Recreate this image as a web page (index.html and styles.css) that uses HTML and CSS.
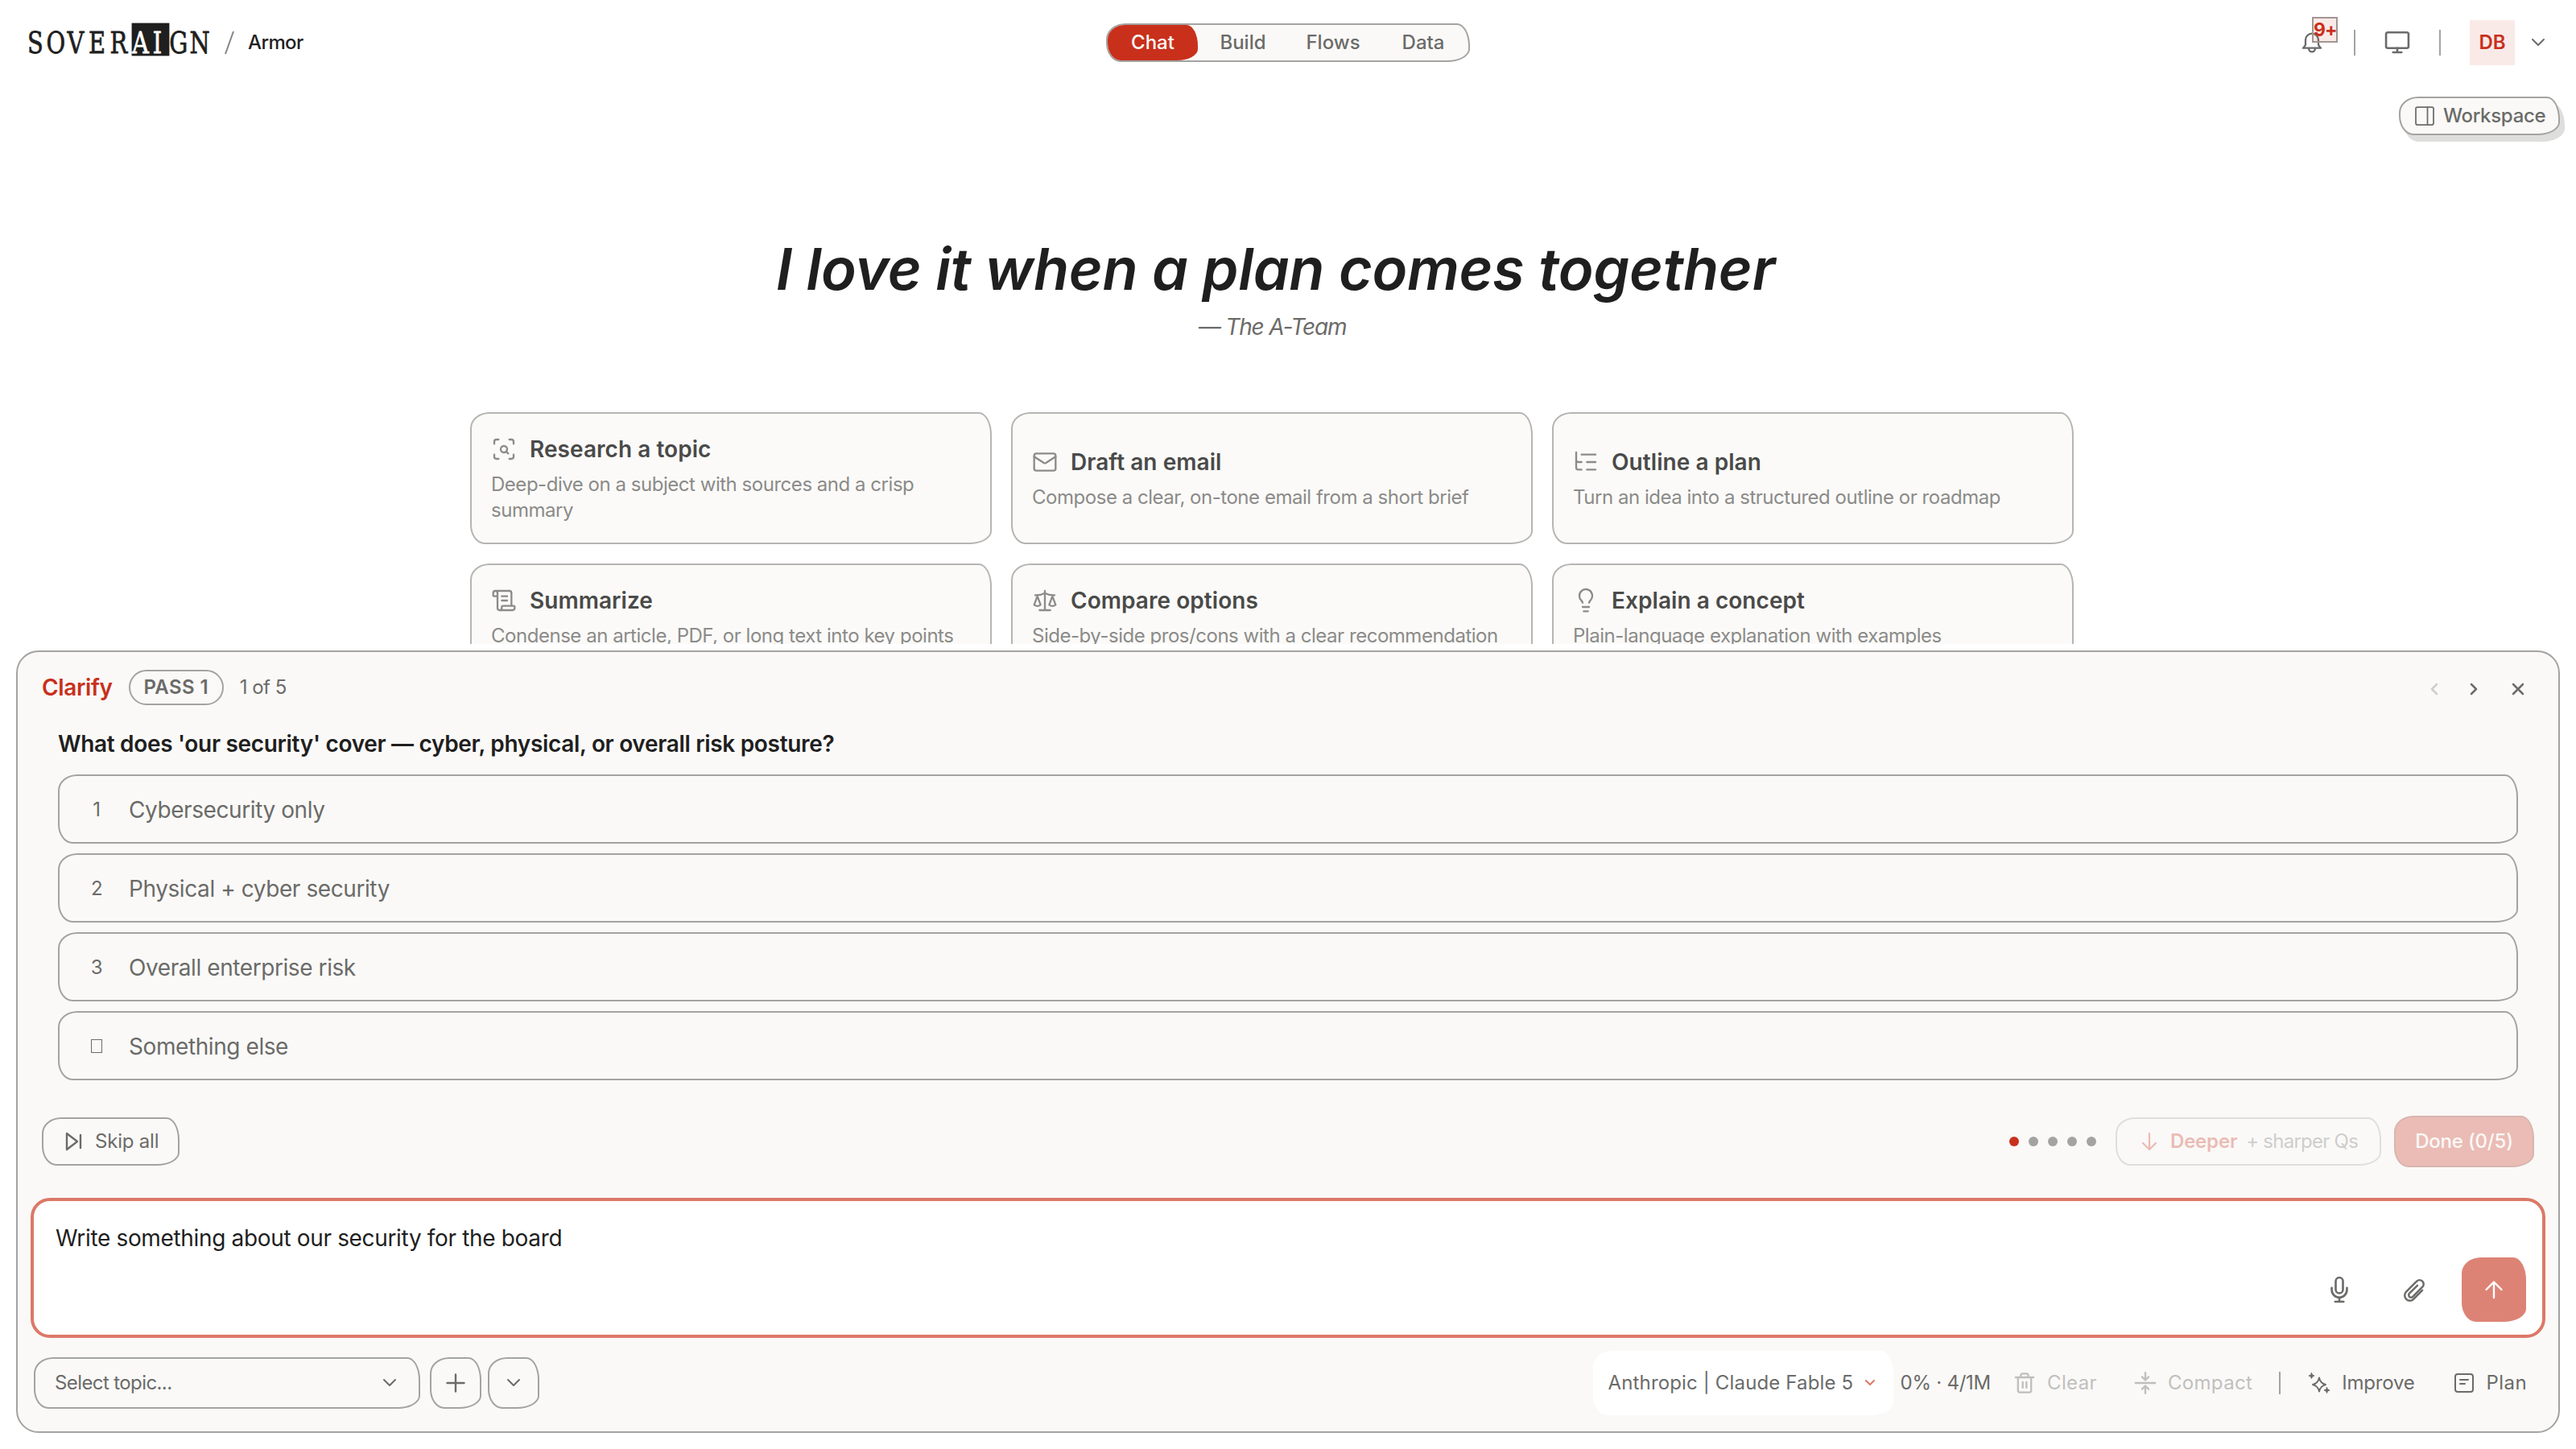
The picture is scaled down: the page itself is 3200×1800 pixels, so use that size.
FILE: index.html
```html
<!DOCTYPE html>
<html lang="en">
<head>
    <meta charset="UTF-8">
    <meta name="viewport" content="width=device-width, initial-scale=1.0">
    <title>Soveraign - Armor</title>
    <link rel="stylesheet" href="styles.css">
</head>
<body>
    <header class="topbar">
        <div class="brand">
            <svg class="logo" width="230" height="44" viewBox="0 0 230 44">
                <rect x="130" y="2" width="46" height="40" fill="#1f1f1f"/>
                <g transform="scale(.76 1)">
                    <text y="39" x="0 31 65 100 135">SOVER</text>
                    <text y="39" x="171 205" class="logo-ai">AI</text>
                    <text y="39" x="232 265">GN</text>
                </g>
            </svg>
            <svg class="slash" width="12" height="30" viewBox="0 0 12 30"><path d="M1 29L11 1"/></svg>
            <span class="org">Armor</span>
        </div>
        <nav class="tabs">
            <a class="tab active">Chat</a>
            <a class="tab">Build</a>
            <a class="tab">Flows</a>
            <a class="tab">Data</a>
        </nav>
        <div class="account">
            <div class="bell">
                <svg class="icon" width="32" height="32" viewBox="0 0 24 24"><path d="M6 9.5a6 6 0 0 1 12 0v4.200c0 1.200 1.300 2 2.300 3.300H3.700c1-1.300 2.300-2.100 2.300-3.300zM9 17.500a3 3 0 0 0 6 0"/></svg>
                <span class="badge">9+</span>
            </div>
            <i class="divider"></i>
            <svg class="icon monitor" width="36" height="36" viewBox="0 0 24 24"><rect x="2.700" y="3.500" width="18.600" height="13" rx="1.500"/><path d="M12 16.500v3.500M8.500 20h7"/></svg>
            <i class="divider"></i>
            <span class="avatar">DB</span>
            <svg class="icon" width="18" height="12" viewBox="0 0 18 12"><path class="thin" d="M2 2l7 7 7-7"/></svg>
        </div>
    </header>

    <main class="hero">
        <button class="workspace box">
            <svg class="icon" width="24" height="24" viewBox="0 0 24 24"><rect x="1" y="1" width="22" height="22" rx="2"/><path d="M15.500 1v22"/></svg>
            <span>Workspace</span>
        </button>
        <div class="intro">
            <h1>I love it when a plan comes together</h1>
            <p class="source">— The A-Team</p>
            <div class="cards">
                <div class="card box">
                    <h3><svg class="icon" width="32" height="32" viewBox="0 0 24 24"><path d="M3 7V5a2 2 0 0 1 2-2h2M17 3h2a2 2 0 0 1 2 2v2M21 17v2a2 2 0 0 1-2 2h-2M7 21H5a2 2 0 0 1-2-2v-2M16 16l-1.900-1.900"/><circle cx="12" cy="12" r="3"/></svg><span>Research a topic</span></h3>
                    <p>Deep-dive on a subject with sources and a crisp<br>summary</p>
                </div>
                <div class="card box">
                    <h3><svg class="icon" width="32" height="32" viewBox="0 0 24 24"><rect x="2" y="4" width="20" height="16" rx="2"/><path d="M22 7l-9 5.700a2 2 0 0 1-2 0L2 7"/></svg><span>Draft an email</span></h3>
                    <p>Compose a clear, on-tone email from a short brief</p>
                </div>
                <div class="card box">
                    <h3><svg class="icon" width="32" height="32" viewBox="0 0 24 24"><path d="M8 5h13M13 12h8M13 19h8M3 3v14a2 2 0 0 0 2 2h3M3 10a2 2 0 0 0 2 2h3"/></svg><span>Outline a plan</span></h3>
                    <p>Turn an idea into a structured outline or roadmap</p>
                </div>
                <div class="card box">
                    <h3><svg class="icon" width="32" height="32" viewBox="0 0 24 24"><path d="M15 12h-5M15 8h-5M19 17V5a2 2 0 0 0-2-2H4M8 21h12a2 2 0 0 0 2-2v-1a1 1 0 0 0-1-1H11a1 1 0 0 0-1 1v1a2 2 0 1 1-4 0V5a2 2 0 1 0-4 0v2a1 1 0 0 0 1 1h3"/></svg><span>Summarize</span></h3>
                    <p>Condense an article, PDF, or long text into key points</p>
                </div>
                <div class="card box">
                    <h3><svg class="icon" width="32" height="32" viewBox="0 0 24 24"><path d="M12 3v18M7 21h10M3 7h1a17 17 0 0 0 8-2 17 17 0 0 0 8 2h1M19 8l3 8a5 5 0 0 1-6 0zM5 8l3 8a5 5 0 0 1-6 0z"/></svg><span>Compare options</span></h3>
                    <p>Side-by-side pros/cons with a clear recommendation</p>
                </div>
                <div class="card box">
                    <h3><svg class="icon" width="32" height="32" viewBox="0 0 24 24"><path d="M15 14c.2-1 .7-1.700 1.500-2.500A6 6 0 1 0 6 8c0 1 .2 2.200 1.500 3.500.7.7 1.300 1.500 1.500 2.500M9 18h6M10 22h4"/></svg><span>Explain a concept</span></h3>
                    <p>Plain-language explanation with examples</p>
                </div>
            </div>
        </div>
    </main>

    <section class="panel">
        <div class="clarify-head">
            <span class="clarify">Clarify</span>
            <span class="pass">PASS 1</span>
            <span class="step">1 of 5</span>
            <div class="pager">
                <svg class="icon off" width="10" height="16" viewBox="0 0 10 16"><path d="M8 2L2 8l6 6"/></svg>
                <svg class="icon" width="10" height="16" viewBox="0 0 10 16"><path d="M2 2l6 6-6 6"/></svg>
                <svg class="icon close" width="16" height="16" viewBox="0 0 16 16"><path d="M2 2l12 12M14 2L2 14"/></svg>
            </div>
        </div>

        <div class="question">
            <h2>What does 'our security' cover — cyber, physical, or overall risk posture?</h2>
            <div class="option box"><span class="num">1</span><span>Cybersecurity only</span></div>
            <div class="option box"><span class="num">2</span><span>Physical + cyber security</span></div>
            <div class="option box"><span class="num">3</span><span>Overall enterprise risk</span></div>
            <div class="option box"><span class="num"><i class="blank"></i></span><span>Something else</span></div>
        </div>

        <div class="actions">
            <button class="skip box">
                <svg class="icon" width="24" height="24" viewBox="0 0 24 24"><path d="M3 2l13 10L3 22zM20 4v16"/></svg>
                <span>Skip all</span>
            </button>
            <div class="dots"><i class="on"></i><i></i><i></i><i></i><i></i></div>
            <button class="deeper box">
                <svg class="icon" width="24" height="24" viewBox="0 0 24 24"><path d="M12 2v20M4 14l8 8 8-8"/></svg>
                <b>Deeper</b><span>+ sharper Qs</span>
            </button>
            <button class="done box">Done (0/5)</button>
        </div>

        <div class="composer">
            <p>Write something about our security for the board</p>
            <div class="composer-tools">
                <svg class="icon mic" width="36" height="36" viewBox="0 0 24 24"><rect x="9" y="2" width="6" height="13" rx="3"/><path d="M5.700 10.500v1.700a6.300 6.300 0 0 0 12.600 0v-1.700M12 18.500V22M8.500 22h7"/></svg>
                <svg class="icon clip" width="34" height="34" viewBox="0 0 24 24"><path d="M18.400 12.600l-7.700 7.700a4.500 4.500 0 0 1-6.400-6.400l9.200-9.200a3.500 3.500 0 0 1 5 5l-8.500 8.500a2 2 0 0 1-2.900-2.900l7-7"/></svg>
                <button class="send box"><svg class="icon" width="24" height="24" viewBox="0 0 24 24"><path d="M12 22V3M2.500 12L12 2.500l9.500 9.500"/></svg></button>
            </div>
        </div>

        <div class="toolbar">
            <div class="topic box">
                <span>Select topic...</span>
                <svg class="icon" width="18" height="12" viewBox="0 0 18 12"><path class="thin" d="M2 2l7 7 7-7"/></svg>
            </div>
            <button class="square box"><svg class="icon" width="24" height="24" viewBox="0 0 24 24"><path d="M12 1.500v21M1.500 12h21"/></svg></button>
            <button class="square box"><svg class="icon" width="18" height="12" viewBox="0 0 18 12"><path class="thin" d="M2 2l7 7 7-7"/></svg></button>
            <div class="model">
                <span>Anthropic | Claude Fable 5</span>
                <svg class="icon" width="14" height="10" viewBox="0 0 14 10"><path class="thin" d="M2 2l5 5 5-5"/></svg>
            </div>
            <span class="usage">0% · 4/1M</span>
            <div class="tool clear">
                <svg class="icon" width="28" height="28" viewBox="0 0 24 24"><path d="M2.500 6h19M5 6v14a2 2 0 0 0 2 2h10a2 2 0 0 0 2-2V6M8 6V4a2 2 0 0 1 2-2h4a2 2 0 0 1 2 2v2M10 11v6M14 11v6"/></svg>
                <span>Clear</span>
            </div>
            <div class="tool compact">
                <svg class="icon" width="28" height="28" viewBox="0 0 24 24"><path d="M12 1v7.500M8.500 5.500L12 9l3.500-3.500M12 23v-7.500M8.500 18.500L12 15l3.500 3.500M1.500 12h21"/></svg>
                <span>Compact</span>
            </div>
            <i class="divider"></i>
            <div class="tool improve">
                <svg class="icon" width="28" height="28" viewBox="0 0 28 28"><path d="M14 7.500c1 5 3 7 8 8.500-5 1.500-7 3.500-8 8.500-1-5-3-7-8-8.500 5-1.500 7-3.500 8-8.500z"/><path class="spark" d="M4.500 1.500l1 2.500 2.500 1-2.500 1-1 2.500-1-2.500-2.500-1 2.500-1zM23.500 19.500l1 2.500 2.500 1-2.500 1-1 2.500-1-2.500-2.500-1 2.500-1z"/></svg>
                <span>Improve</span>
            </div>
            <div class="tool plan">
                <svg class="icon" width="26" height="26" viewBox="0 0 26 26"><rect x="2" y="2" width="22" height="22" rx="3"/><path d="M8 9h10M8 14h6"/></svg>
                <span>Plan</span>
            </div>
        </div>
    </section>
</body>
</html>
```
FILE: styles.css
```css
* {
    box-sizing: border-box;
}
body {
    margin: 0;
    height: 1800px;
    display: flex;
    flex-direction: column;
    overflow: hidden;
    background: #fff;
    color: #6b6b69;
    font-family: Inter, "Liberation Sans", sans-serif;
    font-size: 24px;
    line-height: 32px;
}
h1, h2, h3, p {
    margin: 0;
}
button {
    font: inherit;
    color: inherit;
    padding: 0;
    background: none;
}
.box {
    border: 2px solid #a3a3a1;
    border-radius: 24px 16px 28px 18px / 20px 28px 16px 24px;
}
.icon {
    display: block;
    flex: none;
    fill: none;
    stroke: currentColor;
    stroke-width: 1.75;
    stroke-linecap: round;
    stroke-linejoin: round;
}
.thin {
    stroke-width: 2;
}
.divider {
    width: 2px;
    height: 32px;
    background: #a3a3a1;
}

/* top bar */
.topbar {
    display: grid;
    grid-template-columns: 1fr auto 1fr;
    align-items: center;
    flex: none;
    height: 106px;
    padding: 0 38px;
}
.brand {
    display: flex;
    align-items: center;
    margin-left: -4px;
}
.logo {
    margin-top: -8px;
    overflow: visible;
    font-family: "DejaVu Serif", serif;
    font-size: 38px;
    fill: #1f1f1f;
    stroke: #1f1f1f;
    stroke-width: .8;
}
.logo-ai {
    fill: #fff;
    stroke: #fff;
}
.slash {
    margin-left: 15px;
    fill: none;
    stroke: #858583;
    stroke-width: 2;
}
.org {
    margin-left: 17px;
    color: #1f1f1f;
    font-weight: 500;
    letter-spacing: -.6px;
}
.tabs {
    display: flex;
    width: 452px;
    height: 48px;
    border: 2px solid #a3a3a1;
    border-radius: 24px 16px 28px 18px / 20px 28px 16px 24px;
    background: #faf9f7;
    font-weight: 500;
}
.tab {
    display: flex;
    align-items: center;
    justify-content: center;
    width: 112px;
    border-radius: 22px 14px 26px 16px / 18px 26px 14px 22px;
}
.tab.active {
    background: #c8301c;
    color: #faf9f7;
}
.account {
    display: flex;
    align-items: center;
    justify-content: flex-end;
}
.bell {
    position: relative;
    margin-right: 36px;
}
.badge {
    position: absolute;
    left: 16px;
    top: -16px;
    width: 32px;
    height: 32px;
    border: 2px solid #a39593;
    background: rgba(200, 48, 28, .1);
    color: #c8301c;
    font-weight: 700;
    font-size: 23px;
    line-height: 28px;
    letter-spacing: -1px;
    text-align: center;
}
.monitor {
    margin: 0 34px;
}
.avatar {
    width: 56px;
    height: 56px;
    margin: 0 20px 0 36px;
    background: #f9eae8;
    color: #c8301c;
    font-weight: 600;
    line-height: 56px;
    text-align: center;
}

/* landing area, cut off by the panel */
.hero {
    flex: none;
    height: 694px;
    overflow: hidden;
    display: flex;
    flex-direction: column;
}
.workspace {
    display: flex;
    align-items: center;
    align-self: flex-end;
    flex: none;
    gap: 11px;
    width: 200px;
    height: 48px;
    margin: 14px 20px 0 0;
    padding-left: 18px;
    background: #faf9f7;
    box-shadow: 6px 8px 0 #dededd;
    font-weight: 500;
    letter-spacing: -.3px;
}
.intro {
    width: 1992px;
    margin-left: 584px;
    text-align: center;
}
h1 {
    margin-top: 118px;
    padding-left: 9px;
    color: #1f1f1f;
    font-size: 72px;
    font-style: italic;
    font-weight: 600;
    line-height: 96px;
    letter-spacing: -.33px;
}
.source {
    margin-top: 4px;
    padding-left: 1px;
    font-size: 28px;
    font-style: italic;
    line-height: 40px;
    letter-spacing: -1.15px;
}
.cards {
    display: grid;
    grid-template-columns: repeat(3, 648px);
    gap: 24px;
    margin-top: 86px;
    text-align: left;
}
.card {
    display: flex;
    flex-direction: column;
    justify-content: center;
    padding: 24px;
    border-color: #b5b5b3;
    background: #fbfaf8;
    color: #8b8b89;
    letter-spacing: -.47px;
    white-space: nowrap;
}
.card h3 {
    display: flex;
    align-items: center;
    gap: 16px;
    margin-bottom: 8px;
    font-size: 28px;
    font-weight: 600;
    line-height: 40px;
    letter-spacing: .05px;
}
.card h3 span {
    color: #4a4a49;
}

/* clarify panel */
.panel {
    flex: none;
    height: 972px;
    margin: 8px 20px 0;
    border: 2px solid #a3a3a1;
    border-radius: 28px;
    background: #faf9f7;
}
.clarify-head {
    display: flex;
    align-items: center;
    height: 44px;
    margin: 22px 42px 0 30px;
}
.clarify {
    color: #c8301c;
    font-size: 28px;
    font-weight: 600;
    letter-spacing: -.35px;
}
.pass {
    width: 118px;
    height: 44px;
    margin: 0 20px;
    border: 2px solid #a3a3a1;
    border-radius: 22px;
    font-weight: 600;
    line-height: 40px;
    letter-spacing: .4px;
    text-align: center;
}
.step {
    letter-spacing: -.5px;
}
.pager {
    display: flex;
    align-items: center;
    margin: 3px 0 0 auto;
}
.pager .icon {
    margin-left: 39px;
    stroke-width: 2.5;
}
.pager .close {
    margin-left: 42px;
}
.off {
    opacity: .3;
}
.question {
    padding: 28px 50px 0;
}
h2 {
    margin-bottom: 18px;
    color: #1f1f1f;
    font-size: 28px;
    font-weight: 600;
    line-height: 40px;
    letter-spacing: -.32px;
}
.option {
    display: flex;
    align-items: center;
    height: 86px;
    margin-bottom: 12px;
    padding: 2px 0 0 31px;
    font-size: 28px;
    letter-spacing: -.42px;
}
.num {
    width: 30px;
    margin-right: 25px;
    font-size: 24px;
    text-align: center;
}
.blank {
    display: inline-block;
    width: 14px;
    height: 17px;
    border: 1px solid #6b6b69;
}
.actions {
    display: flex;
    align-items: center;
    height: 64px;
    margin: 44px 30px 0;
}
.skip {
    display: flex;
    align-items: center;
    gap: 14px;
    width: 171px;
    height: 60px;
    padding-left: 26px;
    letter-spacing: -.2px;
}
.dots {
    display: flex;
    gap: 12px;
    margin-left: auto;
}
.dots i {
    width: 12px;
    height: 12px;
    border-radius: 50%;
    background: #a3a3a1;
}
.dots .on {
    background: #c8301c;
}
.deeper {
    display: flex;
    align-items: center;
    width: 330px;
    height: 60px;
    margin: 0 16px 0 24px;
    padding-left: 28px;
    letter-spacing: -.75px;
    opacity: .3;
}
.deeper .icon, .deeper b {
    color: #c8301c;
    stroke-width: 2.2;
}
.deeper b {
    margin: 0 11px 0 14px;
    font-weight: 600;
    letter-spacing: -.2px;
}
.done {
    width: 174px;
    height: 64px;
    border-color: #d8b5b0;
    background: #ebbcb5;
    color: #faf9f7;
    font-weight: 500;
    letter-spacing: -.2px;
}
.composer {
    height: 174px;
    margin: 38px 16px 0;
    padding: 27px 20px 16px 27px;
    border: 4px solid #dc7868;
    border-radius: 24px;
    background: #fff;
}
.composer p {
    margin-bottom: 5px;
    color: #1f1f1f;
    font-size: 28px;
    line-height: 38px;
    letter-spacing: -.34px;
}
.composer-tools {
    display: flex;
    align-items: center;
    justify-content: flex-end;
}
.mic {
    margin-right: 59px;
}
.clip {
    margin-right: 41px;
}
.send {
    display: grid;
    place-items: center;
    width: 80px;
    height: 80px;
    border: none;
    background: #dd8375;
    color: #fff;
}
.send .icon, .square .icon, .skip .icon {
    stroke-width: 2.4;
}
.toolbar {
    display: flex;
    align-items: center;
    height: 80px;
    margin: 16px 39px 0 20px;
}
.topic {
    display: flex;
    align-items: center;
    justify-content: space-between;
    width: 480px;
    height: 64px;
    margin-right: 4px;
    padding: 0 27px 0 24px;
    letter-spacing: -.6px;
}
.square {
    display: grid;
    place-items: center;
    width: 64px;
    height: 64px;
    margin-left: 8px;
}
.model {
    display: flex;
    align-items: center;
    justify-content: space-between;
    width: 373px;
    height: 80px;
    margin: 0 9px 0 auto;
    padding: 0 22px 0 19px;
    border-radius: 24px 16px 28px 18px / 20px 28px 16px 24px;
    background: #fff;
    letter-spacing: .15px;
}
.model .icon {
    color: #dc7868;
}
.usage {
    letter-spacing: -.25px;
}
.tool {
    display: flex;
    align-items: center;
    gap: 14px;
}
.tool .icon {
    stroke-width: 2;
}
.clear, .compact {
    letter-spacing: .35px;
    opacity: .4;
}
.clear {
    margin: 0 46px 0 28px;
}
.toolbar .divider {
    height: 28px;
    margin: 0 34px 0 33px;
}
.improve {
    margin-right: 48px;
    letter-spacing: -.2px;
}
.spark {
    fill: currentColor;
    stroke-width: 1;
}
.plan {
    gap: 15px;
    letter-spacing: .4px;
}
```
